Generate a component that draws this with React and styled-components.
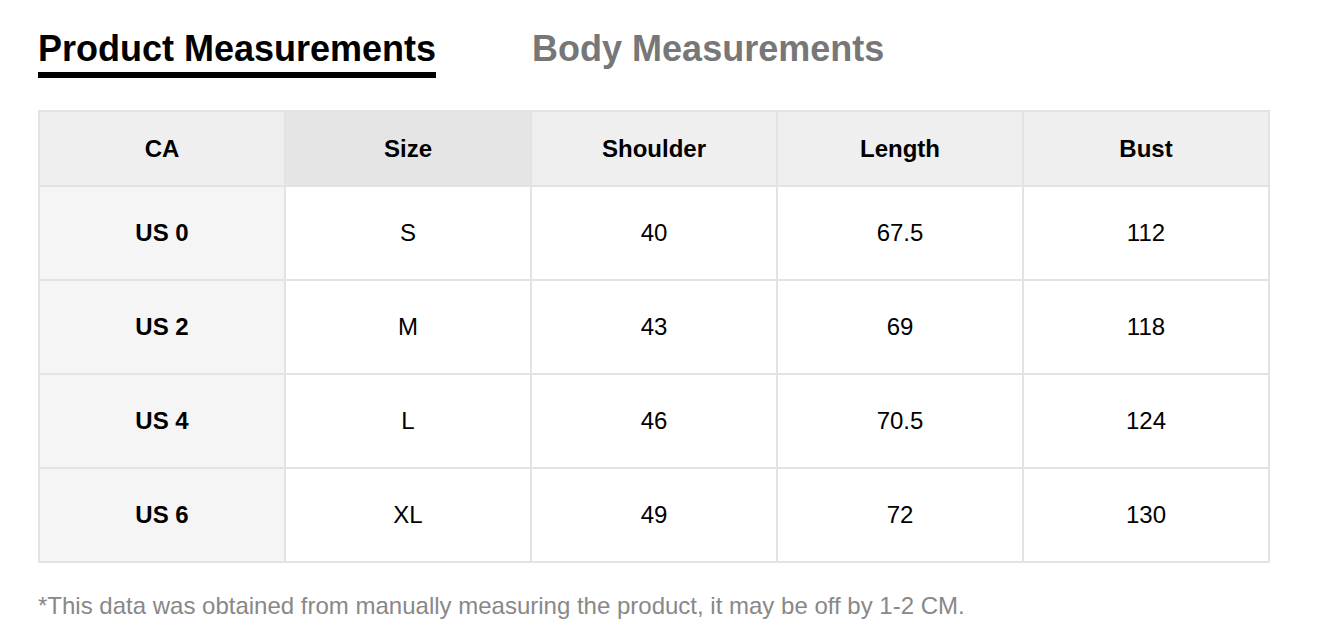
import React from 'react'
import styled, { createGlobalStyle } from 'styled-components'

const GlobalStyle = createGlobalStyle`
  body {
    margin: 0;
    background: #fff;
    font-family: 'Liberation Sans', Arial, sans-serif;
  }
`

const Page = styled.div`
  padding: 24px 38px 0 38px;
  box-sizing: border-box;
`

const Tabs = styled.div`
  display: flex;
  gap: 96px;
`

const Tab = styled.div`
  font-size: 36px;
  font-weight: 700;
  line-height: 44px;
  color: ${p => (p.active ? '#000' : '#777')};
  padding: 3px 0 1px 0;
  border-bottom: 6px solid ${p => (p.active ? '#000' : 'transparent')};
`

const Table = styled.table`
  margin-top: 32px;
  width: 1232px;
  border-collapse: collapse;
  table-layout: fixed;
  border: 2px solid #e3e3e3;
`

const Th = styled.th`
  height: 73px;
  font-size: 24px;
  font-weight: 700;
  color: #000;
  background: ${p => (p.dark ? '#e5e5e5' : '#efefef')};
  border: 2px solid #e3e3e3;
  text-align: center;
  padding: 0;
`

const Td = styled.td`
  height: 92px;
  font-size: 24px;
  font-weight: ${p => (p.label ? 700 : 400)};
  color: #000;
  background: ${p => (p.label ? '#f5f5f5' : '#fff')};
  border: 2px solid #e3e3e3;
  text-align: center;
  padding: 0;
`

const Note = styled.p`
  margin: 29px 0 0 0;
  font-size: 24px;
  line-height: 28px;
  color: #888;
`

const headers = ['CA', 'Size', 'Shoulder', 'Length', 'Bust']

const rows = [
  ['US 0', 'S', '40', '67.5', '112'],
  ['US 2', 'M', '43', '69', '118'],
  ['US 4', 'L', '46', '70.5', '124'],
  ['US 6', 'XL', '49', '72', '130']
]

export default function App () {
  return (
    <Page>
      <GlobalStyle />
      <Tabs>
        <Tab active>Product Measurements</Tab>
        <Tab>Body Measurements</Tab>
      </Tabs>
      <Table>
        <thead>
          <tr>
            {headers.map(h => (
              <Th key={h} dark={h === 'Size'}>{h}</Th>
            ))}
          </tr>
        </thead>
        <tbody>
          {rows.map(r => (
            <tr key={r[0]}>
              {r.map((c, i) => (
                <Td key={i} label={i === 0}>{c}</Td>
              ))}
            </tr>
          ))}
        </tbody>
      </Table>
      <Note>*This data was obtained from manually measuring the product, it may be off by 1-2 CM.</Note>
    </Page>
  )
}
